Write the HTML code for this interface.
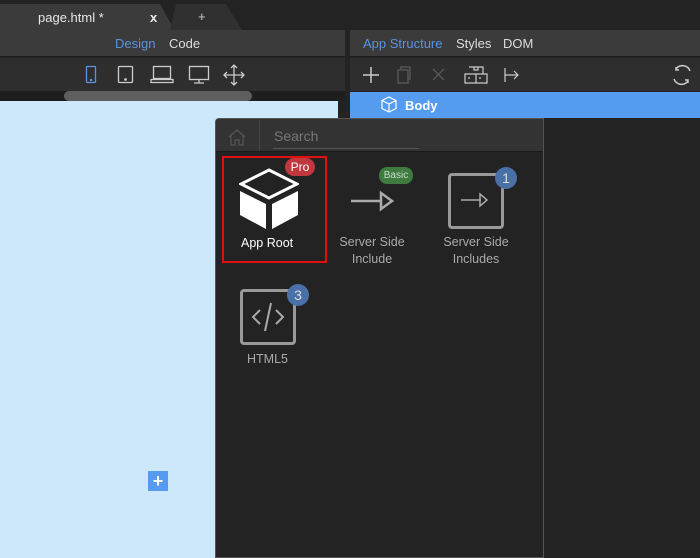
<!DOCTYPE html><html><head><style>
*{margin:0;padding:0;box-sizing:border-box}
body{width:700px;height:558px;overflow:hidden;background:#232323;font-family:"Liberation Sans",sans-serif;position:relative;font-size:13px}
.a{position:absolute}
</style></head><body>
<div class="a" style="left:0;top:0;width:700px;height:30px;background:#232323"></div>
<div class="a" style="left:0;top:4px;width:175px;height:27px;background:#3b3b3b;clip-path:polygon(0 0,160px 0,175px 100%,0 100%)"></div>
<div class="a" style="left:170px;top:4px;width:72px;height:26px;background:#303030;clip-path:polygon(6px 0,56px 0,72px 100%,0 100%)"></div>
<div class="a" style="left:38px;top:10px;color:#e8e8e8;font-size:13px">page.html *</div>
<div class="a" style="left:150px;top:10px;color:#eee;font-weight:bold">x</div>
<div class="a" style="left:198px;top:9px;color:#ccc">+</div>
<div class="a" style="left:0;top:30px;width:345px;height:27px;background:#3b3b3b;border-bottom:1px solid #1e1e1e"></div>
<div class="a" style="left:115px;top:36px;color:#5a93e0">Design</div>
<div class="a" style="left:169px;top:36px;color:#ddd">Code</div>
<div class="a" style="left:0;top:58px;width:345px;height:33px;background:#2e2e2e"></div>
<svg class="a" style="left:80px;top:62px" width="170" height="26" fill="none" stroke-width="1.3">
<rect x="6.5" y="4.5" width="9" height="16" rx="1" stroke="#5a93e0"/><circle cx="11" cy="18" r=".6" fill="#5a93e0" stroke="#5a93e0"/>
<rect x="38.5" y="4.5" width="14" height="16" rx="1" stroke="#ccc"/><circle cx="45.5" cy="17.5" r=".7" fill="#ccc" stroke="#ccc"/>
<rect x="73.5" y="4.5" width="17" height="12" stroke="#ccc"/><path d="M71 17.5h22v3H71z" stroke="#ccc"/>
<rect x="109.5" y="4.5" width="19" height="13" stroke="#ccc"/><path d="M119 17.5v3M114 21h10" stroke="#ccc"/>
<path d="M154 3v20M144 13h20M151 6l3-3 3 3M151 20l3 3 3-3M147 10l-3 3 3 3M161 10l3 3-3 3" stroke="#ccc"/>
</svg>
<div class="a" style="left:0;top:91px;width:345px;height:10px;background:#1e1e1e"></div>
<div class="a" style="left:64px;top:91px;width:188px;height:10px;border-radius:5px;background:#5e5e5e"></div>
<div class="a" style="left:0;top:101px;width:338px;height:457px;background:#cce8fa"></div>
<div class="a" style="left:148px;top:471px;width:20px;height:20px;background:#559cf0;color:#fff;font-weight:bold;font-size:18px;line-height:20px;text-align:center">+</div>
<div class="a" style="left:350px;top:30px;width:350px;height:27px;background:#3b3b3b;border-bottom:1px solid #1e1e1e"></div>
<div class="a" style="left:363px;top:36px;color:#5a93e0">App Structure</div>
<div class="a" style="left:456px;top:36px;color:#ddd">Styles</div>
<div class="a" style="left:503px;top:36px;color:#ddd">DOM</div>
<div class="a" style="left:350px;top:58px;width:350px;height:33px;background:#2e2e2e"></div>
<svg class="a" style="left:350px;top:58px" width="350" height="33" fill="none" stroke-width="1.5">
<path d="M21 9v16M13 17h16" stroke="#ccc"/>
<rect x="48" y="12" width="10" height="13" stroke="#555"/><path d="M51 12V9h9v12h-2" stroke="#555"/>
<path d="M83 11l11 11M94 11L83 22" stroke="#555"/>
<path d="M115 16h22v9h-22zM126 16v9M119 9h14v7M119 19v2M130 19v2M124 9v3h4V9" stroke="#ccc" stroke-width="1.2"/>
<path d="M155 10v14M155 17h13M164 13l4 4-4 4" stroke="#ccc" stroke-width="1.2"/>
<path d="M340 13a8 8 0 0 0-14-2M326 9v3h3M324 21a8 8 0 0 0 14 2M338 25v-3h-3" stroke="#ccc"/>
</svg>
<div class="a" style="left:350px;top:92px;width:350px;height:26px;background:#559cf0"></div>
<svg class="a" style="left:380px;top:96px" width="18" height="18" fill="none" stroke="#fff" stroke-width="1.2"><path d="M9 1l7 3.5v8L9 16 2 12.5v-8zM2 4.5L9 8l7-3.5M9 8v8"/></svg>
<div class="a" style="left:405px;top:98px;color:#fff;font-weight:bold">Body</div>
<div class="a" style="left:215px;top:118px;width:329px;height:440px;background:#232323;border:1px solid #555;border-top-left-radius:4px"></div>
<div class="a" style="left:216px;top:119px;width:327px;height:33px;background:#333;border-bottom:1px solid #1a1a1a;border-top-left-radius:3px"></div>
<div class="a" style="left:259px;top:120px;width:1px;height:31px;background:#444"></div>
<svg class="a" style="left:227px;top:127px" width="20" height="20" fill="none" stroke="#555" stroke-width="1.3"><path d="M2 10l8-7 8 7M4 8.5V18h4v-5h4v5h4V8.5"/></svg>
<div class="a" style="left:274px;top:128px;color:#777;font-size:14px">Search</div>
<div class="a" style="left:273px;top:148px;width:146px;height:1px;background:#555"></div>
<div class="a" style="left:222px;top:156px;width:105px;height:107px;border:2px solid #e01010"></div>
<svg class="a" style="left:239px;top:168px" width="60" height="62"><path d="M30 2l28 14-28 14L2 16z" fill="none" stroke="#fff" stroke-width="3"/><path d="M1 23l26 13v25L1 47zM59 23L33 36v25l26-14z" fill="#fff"/></svg>
<div class="a" style="left:241px;top:235px;color:#fff;font-size:12.5px;line-height:17px">App Root</div>
<div class="a" style="left:285px;top:158px;width:30px;height:18px;border-radius:9px;background:#c0383e;color:#fff;font-size:12px;text-align:center;line-height:18px">Pro</div>
<div class="a" style="left:379px;top:167px;width:34px;height:17px;border-radius:8px;background:#3f7a3f;color:#cdc;font-size:10px;text-align:center;line-height:17px">Basic</div>
<svg class="a" style="left:350px;top:185px" width="50" height="30" fill="none" stroke="#aaa" stroke-width="2.5"><path d="M1 16h30M31 8l11 8-11 8z"/></svg>
<div class="a" style="left:325px;top:234px;width:94px;text-align:center;color:#aaa;font-size:12.5px;line-height:17px">Server Side<br>Include</div>
<div class="a" style="left:448px;top:173px;width:56px;height:56px;border:3px solid #999;border-radius:4px"></div>
<svg class="a" style="left:460px;top:190px" width="30" height="20" fill="none" stroke="#aaa" stroke-width="1.5"><path d="M1 10h20M20 4l7 6-7 6z"/></svg>
<div class="a" style="left:495px;top:167px;width:22px;height:22px;border-radius:11px;background:#4a70a8;color:#ddd;font-size:14px;text-align:center;line-height:22px">1</div>
<div class="a" style="left:429px;top:234px;width:94px;text-align:center;color:#aaa;font-size:12.5px;line-height:17px">Server Side<br>Includes</div>
<div class="a" style="left:240px;top:289px;width:56px;height:56px;border:3px solid #999;border-radius:4px"></div>
<svg class="a" style="left:250px;top:300px" width="36" height="36" fill="none" stroke="#aaa" stroke-width="2"><path d="M10 10l-7 7 7 7M26 10l7 7-7 7M21 3l-6 28"/></svg>
<div class="a" style="left:287px;top:284px;width:22px;height:22px;border-radius:11px;background:#4a70a8;color:#ddd;font-size:14px;text-align:center;line-height:22px">3</div>
<div class="a" style="left:247px;top:351px;color:#aaa;font-size:12.5px;line-height:17px">HTML5</div>
</body></html>
